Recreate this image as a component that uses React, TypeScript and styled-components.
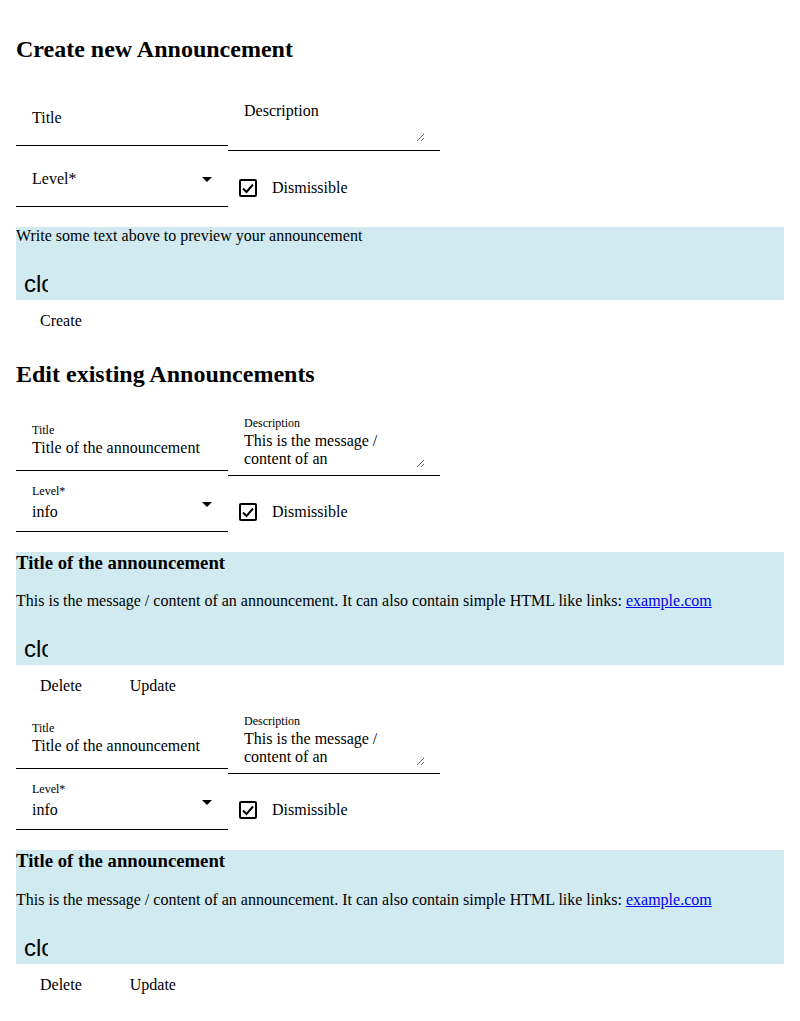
import React from "react";
import styled, { createGlobalStyle } from "styled-components";

const GlobalStyle = createGlobalStyle`
  body {
    margin: 0;
    background: #fff;
    color: #000;
    font-family: "Liberation Serif", "Times New Roman", serif;
    font-size: 16px;
  }
`;

const Page = styled.div`
  padding: 16px;
`;

const Heading = styled.h2`
  margin: 19.92px 0;
  font-size: 24px;
  font-weight: bold;
`;

const Form = styled.form`
  display: flex;
  flex-direction: column;
  padding-top: 1px;
`;

const FieldRow = styled.div`
  display: flex;
  align-items: flex-start;
`;

const FieldBox = styled.div<{ $height: number }>`
  display: flex;
  align-items: flex-start;
  width: 212px;
  height: ${p => p.$height}px;
  box-sizing: border-box;
  padding: 0 16px;
  border-bottom: 1px solid #000;
`;

const FieldBody = styled.div<{ $top: number }>`
  flex: 1;
  display: flex;
  flex-direction: column;
  padding-top: ${p => p.$top}px;
`;

const FloatLabel = styled.span<{ $small: boolean }>`
  font-size: ${p => (p.$small ? 12 : 16)}px;
  line-height: ${p => (p.$small ? 14 : 18)}px;
`;

const Value = styled.span<{ $gap: number }>`
  margin-top: ${p => p.$gap}px;
  line-height: 18px;
  white-space: nowrap;
`;

const TextArea = styled.textarea<{ $gap: number }>`
  display: block;
  width: 181px;
  height: 36px;
  margin: ${p => p.$gap}px 0 0;
  padding: 0;
  border: none;
  outline: none;
  background: transparent;
  color: #000;
  font-family: "Liberation Serif", "Times New Roman", serif;
  font-size: 16px;
  line-height: 18px;
  overflow: hidden;
  resize: vertical;
`;

const Arrow = styled.span`
  margin-top: 26px;
  width: 0;
  height: 0;
  border-left: 5px solid transparent;
  border-right: 5px solid transparent;
  border-top: 5px solid #000;
`;

const CheckLabel = styled.label<{ $top: number }>`
  display: flex;
  align-items: center;
  gap: 15px;
  margin: ${p => p.$top}px 0 0 11px;
  line-height: 18px;
`;

const CheckBox = styled.span`
  display: flex;
  width: 18px;
  height: 18px;
  box-sizing: border-box;
  border: 2px solid #000;
  border-radius: 2px;
`;

const Preview = styled.div`
  margin-top: 20px;
  background: #d1eaf0;
`;

const PreviewTitle = styled.h3`
  margin: 0 0 18.72px;
  font-size: 18.72px;
  font-weight: bold;
`;

const PreviewText = styled.p`
  margin: 0 0 16px;
`;

const Link = styled.a`
  color: #0000ee;
  text-decoration: underline;
`;

const CloseIcon = styled.span`
  display: block;
  width: 24px;
  height: 24px;
  margin: 0 8px;
  padding: 11px 0 4px;
  overflow: hidden;
  white-space: nowrap;
  font-family: "Liberation Sans", Arial, sans-serif;
  font-size: 24px;
  line-height: 24px;
`;

const Actions = styled.div`
  display: flex;
  height: 41px;
`;

const TextButton = styled.button`
  all: unset;
  padding: 0 24px;
  line-height: 41px;
  font-family: "Liberation Serif", "Times New Roman", serif;
  font-size: 16px;
  cursor: pointer;
`;

type Announcement = {
  title: string;
  description: string;
  level: string;
};

const MESSAGE =
  "This is the message / content of an announcement. It can also contain simple HTML like links: ";

const announcements: Announcement[] = [
  { title: "Title of the announcement", description: MESSAGE + "example.com", level: "info" },
  { title: "Title of the announcement", description: MESSAGE + "example.com", level: "info" },
];

const Check = () => (
  <CheckBox>
    <svg width="14" height="14" viewBox="0 0 14 14">
      <polyline points="2,7.5 5.5,11 12,3.5" fill="none" stroke="#000" strokeWidth="2" />
    </svg>
  </CheckBox>
);

const AnnouncementFields = ({ data }: { data?: Announcement }) => {
  const filled = !!data;
  return (
    <>
      <FieldRow>
        <FieldBox $height={62}>
          <FieldBody $top={filled ? 14 : 25}>
            <FloatLabel $small={filled}>Title</FloatLabel>
            {filled && <Value $gap={2}>{data.title}</Value>}
          </FieldBody>
        </FieldBox>
        <FieldBox $height={67}>
          <FieldBody $top={filled ? 7 : 18}>
            <FloatLabel $small={filled}>Description</FloatLabel>
            <TextArea
              $gap={filled ? 2 : -14}
              rows={2}
              defaultValue={data ? data.description : ""}
            />
          </FieldBody>
        </FieldBox>
      </FieldRow>
      <FieldRow>
        <FieldBox $height={56}>
          <FieldBody $top={filled ? 8 : 19}>
            <FloatLabel $small={filled}>Level*</FloatLabel>
            {filled && <Value $gap={5}>{data.level}</Value>}
          </FieldBody>
          <Arrow />
        </FieldBox>
        <CheckLabel $top={filled ? 27 : 28}>
          <Check />
          Dismissible
        </CheckLabel>
      </FieldRow>
    </>
  );
};

export default function App() {
  return (
    <Page>
      <GlobalStyle />
      <Heading>Create new Announcement</Heading>
      <Form onSubmit={e => e.preventDefault()}>
        <AnnouncementFields />
        <Preview>
          <PreviewText>Write some text above to preview your announcement</PreviewText>
          <CloseIcon>close</CloseIcon>
        </Preview>
        <Actions>
          <TextButton type="submit">Create</TextButton>
        </Actions>
      </Form>

      <Heading>Edit existing Announcements</Heading>
      {announcements.map((a, idx) => (
        <Form key={idx} onSubmit={e => e.preventDefault()}>
          <AnnouncementFields data={a} />
          <Preview>
            <PreviewTitle>{a.title}</PreviewTitle>
            <PreviewText>
              {MESSAGE}
              <Link href="#">example.com</Link>
            </PreviewText>
            <CloseIcon>close</CloseIcon>
          </Preview>
          <Actions>
            <TextButton type="button">Delete</TextButton>
            <TextButton type="submit">Update</TextButton>
          </Actions>
        </Form>
      ))}
    </Page>
  );
}
